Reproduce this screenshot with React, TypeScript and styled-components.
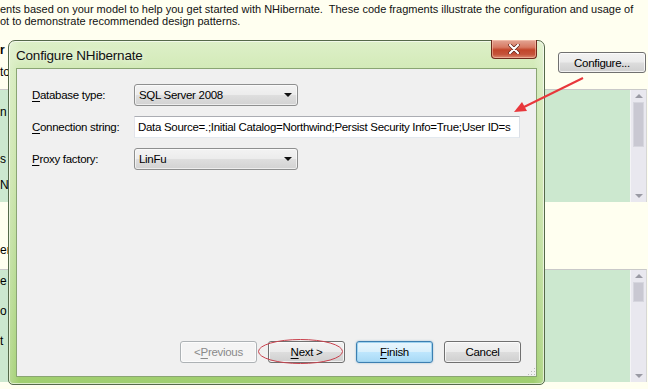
import * as React from 'react';
import styled, { createGlobalStyle, css } from 'styled-components';

const GlobalStyle = createGlobalStyle`
  html, body {
    margin: 0;
    padding: 0;
    background: #fffff0;
  }
  body {
    font-family: "Liberation Sans", Arial, sans-serif;
    overflow: hidden;
  }
`;

const Page = styled.div`
  position: relative;
  width: 648px;
  height: 389px;
  overflow: hidden;
  background: #fffff0;
  color: #000;
  font-size: 12px;
`;

const Intro = styled.div`
  padding-top: 3px;
  height: 37px;
  box-sizing: border-box;
  font-size: 11px;
  line-height: 12px;
  color: #111;
  white-space: nowrap;
`;

const HeaderRow = styled.div`
  display: flex;
  justify-content: space-between;
  height: 52px;
`;

const HeadText = styled.div`
  display: flex;
  flex-direction: column;
  padding-top: 7px;
  gap: 10px;
  font-size: 12px;
  line-height: 12px;
`;

const Bold = styled.span`
  font-weight: bold;
`;

// the dialog text is Segoe-ish: a bit narrower than Arial at the same height
const uiFont = css`
  font-family: "Liberation Sans", Arial, sans-serif;
  font-size: 11.5px;
  letter-spacing: -0.3px;
`;

const winButton = css`
  box-sizing: border-box;
  height: 22px;
  border: 1px solid #707070;
  border-radius: 3px;
  background: linear-gradient(#f2f2f2 0%, #ebebeb 48%, #dddddd 52%, #cfcfcf 100%);
  box-shadow: inset 0 0 0 1px rgba(255, 255, 255, 0.7);
  ${uiFont}
  color: #000;
  display: flex;
  align-items: center;
  justify-content: center;
  padding: 0;
`;

const ConfigureButton = styled.div`
  ${winButton}
  width: 88px;
  height: 21px;
  margin: 15px 2px 0 0;
`;

const Panel = styled.div<{ $h: number }>`
  display: flex;
  width: 647px;
  height: ${(p) => p.$h}px;
  box-sizing: border-box;
  border-top: 1px solid #c9c9c9;
  border-right: 1px solid #d6d6d6;
`;

const PanelBody = styled.div`
  flex: 1;
  background: #cce8cf;
  display: flex;
  flex-direction: column;
  font-size: 12px;
  line-height: 12px;
`;

const Gap = styled.div`
  height: 67px;
  display: flex;
  flex-direction: column;
  font-size: 12px;
  line-height: 12px;
`;

const Frag = styled.div<{ $mt: number }>`
  margin-top: ${(p) => p.$mt}px;
`;

const Scrollbar = styled.div`
  width: 16px;
  background: #e9e8ef;
  border-left: 1px solid #f4f4f6;
  display: flex;
  flex-direction: column;
  align-items: center;
  padding: 4px 0;
  box-sizing: border-box;
`;

const ScrollArrow = styled.div<{ $down?: boolean }>`
  width: 0;
  height: 0;
  border-left: 4px solid transparent;
  border-right: 4px solid transparent;
  ${(p) =>
    p.$down
      ? css`border-top: 4px solid #9a9aa4; margin-top: auto;`
      : css`border-bottom: 4px solid #9a9aa4;`}
`;

const Thumb = styled.div<{ $h: number }>`
  width: 9px;
  height: ${(p) => p.$h}px;
  margin-top: 4px;
  background: #c9c8d2;
  border: 1px solid #d6d6de;
`;

/* ---------- dialog ---------- */

const Dialog = styled.div`
  position: absolute;
  left: 8px;
  top: 40px;
  width: 537px;
  height: 345px;
  box-sizing: border-box;
  border: 1px solid #55694a;
  border-radius: 7px 7px 5px 5px;
  background:
    linear-gradient(to right, rgba(255,255,255,0.25), rgba(255,255,255,0) 2%, rgba(255,255,255,0) 98%, rgba(255,255,255,0.25)),
    linear-gradient(#ddf0c8 0%, #d3eab8 8%, #c6e2a4 40%, #b2d88a 70%, #a0ce6e 100%);
  box-shadow: inset 0 0 0 1px rgba(255, 255, 255, 0.6);
  padding: 0 7px 7px 7px;
  display: flex;
  flex-direction: column;
`;

const TitleBar = styled.div`
  height: 27px;
  display: flex;
  align-items: center;
  justify-content: space-between;
`;

const Title = styled.div`
  font-family: "Liberation Sans", Arial, sans-serif;
  font-size: 13.5px;
  letter-spacing: -0.2px;
  color: #111;
  padding-top: 2px;
  text-shadow: 0 0 6px rgba(255, 255, 255, 0.9);
`;

const CloseButton = styled.div`
  align-self: flex-start;
  width: 46px;
  height: 19px;
  margin-top: -1px;
  box-sizing: border-box;
  border: 1px solid #6e2a1c;
  border-top: none;
  border-radius: 0 0 4px 4px;
  background: linear-gradient(#e3a594 0%, #d77a63 40%, #c2452a 55%, #c5533a 80%, #dc8a70 100%);
  box-shadow: inset 0 0 0 1px rgba(255, 210, 190, 0.5);
  display: flex;
  align-items: center;
  justify-content: center;
`;

const Client = styled.div`
  flex: 1;
  box-sizing: border-box;
  border: 1px solid #8aa573;
  background: #f0f0f0;
  padding: 15px 15px 13px 15px;
  display: flex;
  flex-direction: column;
  position: relative;
`;

const Form = styled.div`
  display: grid;
  grid-template-columns: 102px auto;
  row-gap: 10px;
  align-items: center;
`;

const Label = styled.div`
  ${uiFont}
  color: #000;
`;

const Key = styled.span`
  text-decoration: underline;
  text-underline-offset: 2px;
`;

const Select = styled.div`
  box-sizing: border-box;
  width: 164px;
  height: 22px;
  border: 1px solid #8e8f8f;
  border-radius: 3px;
  background: linear-gradient(#f3f3f3 0%, #ececec 48%, #dedede 52%, #d2d2d2 100%);
  box-shadow: inset 0 0 0 1px rgba(255, 255, 255, 0.6);
  display: flex;
  align-items: center;
  justify-content: space-between;
  padding: 0 5px 0 4px;
  ${uiFont}
`;

const Caret = styled.div`
  width: 0;
  height: 0;
  border-left: 4px solid transparent;
  border-right: 4px solid transparent;
  border-top: 4px solid #111;
`;

const TextInput = styled.div`
  box-sizing: border-box;
  width: 386px;
  height: 22px;
  border: 1px solid #abadb3;
  border-left-color: #e2e3ea;
  border-right-color: #dbdfe6;
  border-bottom-color: #e3e9ef;
  background: #fff;
  padding: 0 3px;
  display: flex;
  align-items: center;
  white-space: nowrap;
  overflow: hidden;
  ${uiFont}
`;

const ButtonRow = styled.div`
  margin-top: auto;
  display: flex;
  justify-content: flex-end;
  gap: 11px;
`;

const DlgButton = styled.div<{ $kind?: 'disabled' | 'default' }>`
  ${winButton}
  width: 77px;
  ${(p) =>
    p.$kind === 'disabled' &&
    css`
      border-color: #adb2b5;
      background: #f4f4f4;
      color: #8a8a8a;
    `}
  ${(p) =>
    p.$kind === 'default' &&
    css`
      border-color: #3c7fb1;
      background: linear-gradient(#eaf6fd 0%, #d9f0fc 48%, #bee6fd 52%, #a7d9f5 100%);
      box-shadow: inset 0 0 0 1px #9fd3f0, 0 0 2px rgba(60, 127, 177, 0.5);
    `}
`;

const Grip = styled.div`
  position: absolute;
  right: 1px;
  bottom: 1px;
  width: 8px;
  height: 8px;
  background:
    radial-gradient(circle, #b8b8b8 0.8px, transparent 1px) 0 0 / 3px 3px;
  clip-path: polygon(100% 0, 100% 100%, 0 100%);
`;

const Overlay = styled.svg`
  position: absolute;
  left: 0;
  top: 0;
  pointer-events: none;
`;

export default function App() {
  return (
    <Page>
      <GlobalStyle />
      <Intro>
        <div>ents based on your model to help you get started with NHibernate.&nbsp; These code fragments illustrate the configuration and usage of</div>
        <div>ot to demonstrate recommended design patterns.</div>
      </Intro>
      <HeaderRow>
        <HeadText>
          <Bold>r</Bold>
          <span>to</span>
        </HeadText>
        <ConfigureButton>Configure...</ConfigureButton>
      </HeaderRow>
      <Panel $h={113}>
        <PanelBody>
          <Frag $mt={16}>n</Frag>
          <Frag $mt={35}>s</Frag>
          <Frag $mt={14}>N</Frag>
        </PanelBody>
        <Scrollbar>
          <ScrollArrow />
          <Thumb $h={43} />
          <ScrollArrow $down />
        </Scrollbar>
      </Panel>
      <Gap>
        <Frag $mt={42}>er</Frag>
      </Gap>
      <Panel $h={113}>
        <PanelBody>
          <Frag $mt={5}>e</Frag>
          <Frag $mt={18}>o</Frag>
          <Frag $mt={18}>t</Frag>
        </PanelBody>
        <Scrollbar>
          <ScrollArrow />
          <Thumb $h={18} />
          <ScrollArrow $down />
        </Scrollbar>
      </Panel>

      <Dialog>
        <TitleBar>
          <Title>Configure NHibernate</Title>
          <CloseButton>
            <svg width="12" height="10" viewBox="0 0 12 10">
              <path d="M2 1 L10 9 M10 1 L2 9" stroke="#5a1a10" strokeWidth="3.4" strokeLinecap="round" />
              <path d="M2 1 L10 9 M10 1 L2 9" stroke="#fff" strokeWidth="2.2" strokeLinecap="round" />
            </svg>
          </CloseButton>
        </TitleBar>
        <Client>
          <Form>
            <Label><Key>D</Key>atabase type:</Label>
            <Select>
              <span>SQL Server 2008</span>
              <Caret />
            </Select>
            <Label><Key>C</Key>onnection string:</Label>
            <TextInput>Data Source=.;Initial Catalog=Northwind;Persist Security Info=True;User ID=s</TextInput>
            <Label><Key>P</Key>roxy factory:</Label>
            <Select>
              <span>LinFu</span>
              <Caret />
            </Select>
          </Form>
          <ButtonRow>
            <DlgButton $kind="disabled">&lt; <Key>P</Key>revious</DlgButton>
            <DlgButton><Key>N</Key>ext &gt;</DlgButton>
            <DlgButton $kind="default"><Key>F</Key>inish</DlgButton>
            <DlgButton>Cancel</DlgButton>
          </ButtonRow>
          <Grip />
        </Client>
      </Dialog>

      <Overlay width="648" height="389" viewBox="0 0 648 389">
        <line x1="583" y1="78" x2="524" y2="107" stroke="#e8373b" strokeWidth="2" />
        <polygon points="514,112 522,102 527,111" fill="#e8373b" />
        <ellipse cx="300.5" cy="351.5" rx="42" ry="12" fill="none" stroke="#c9404c" strokeWidth="1" />
      </Overlay>
    </Page>
  );
}
